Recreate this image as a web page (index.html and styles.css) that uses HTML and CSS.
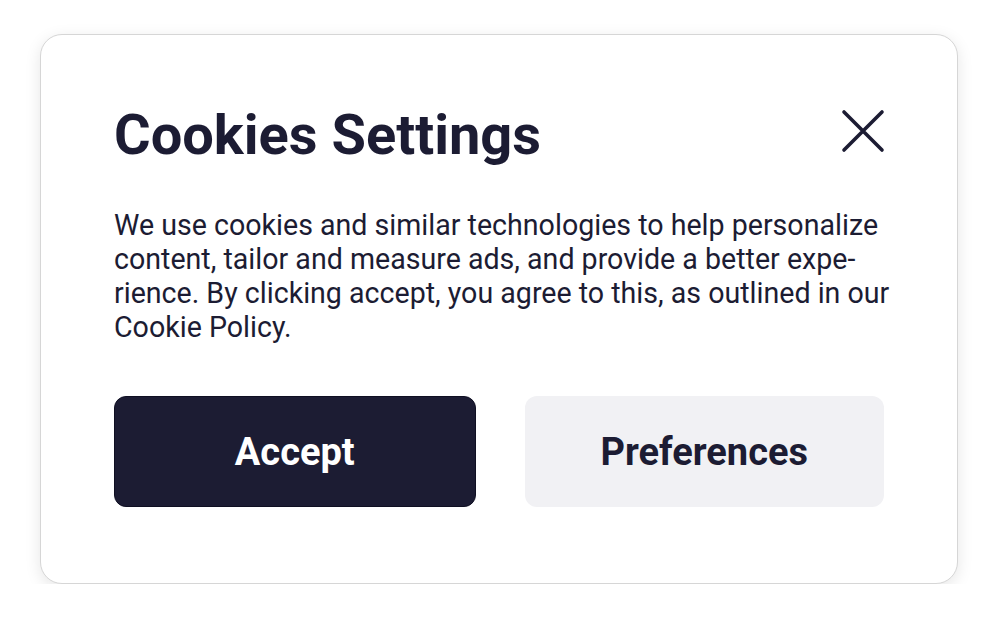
FILE: index.html
```html
<!DOCTYPE html>
<html lang="en">
<head>
  <meta charset="UTF-8">
  <meta name="viewport" content="width=device-width, initial-scale=1.0">
  <title>Cookies Settings</title>
  <link rel="stylesheet" href="styles.css">
</head>
<body>

  <!-- Cookie dialog -->
  <div class="cookie-card">
    <div class="cookie-header">
      <h1>Cookies Settings</h1>
      <button class="close-btn" aria-label="Close">
        <svg width="44" height="44" viewBox="0 0 44 44">
          <path d="M3 3 L41 41 M41 3 L3 41" stroke="#1c1c33" stroke-width="3.6" stroke-linecap="round" fill="none"/>
        </svg>
      </button>
    </div>

    <p class="cookie-text">We use cookies and similar technologies to help personalize content, tailor and measure ads, and provide a better expe&shy;rience. By clicking accept, you agree to this, as outlined in our Cookie Policy.</p>

    <div class="cookie-actions">
      <button class="btn btn-accept">Accept</button>
      <button class="btn btn-prefs">Preferences</button>
    </div>
  </div>

</body>
</html>
```

FILE: styles.css
```css
/* Reset */
* {
  margin: 0;
  padding: 0;
  box-sizing: border-box;
  font-family: Roboto, "Liberation Sans", sans-serif;
}

body {
  background-color: #fff;
  color: #1c1c33;
}

/* Card */
.cookie-card {
  width: 918px;
  height: 550px;
  margin: 34px 0 0 40px;
  padding: 66px 73px 0 73px;
  background-color: #fff;
  border: 1px solid #d6d6d6;
  border-radius: 22px;
  box-shadow: 0 4px 16px rgba(0, 0, 0, 0.1);
}

/* Header */
.cookie-header {
  display: flex;
  justify-content: space-between;
  align-items: flex-start;
}
.cookie-header h1 {
  font-size: 56px;
  font-weight: 700;
  line-height: 68px;
  color: #1c1c33;
}
.close-btn {
  background: none;
  border: none;
  cursor: pointer;
  margin-top: 8px;
  margin-right: -1px;
  display: block;
}
.close-btn svg {
  display: block;
}

/* Text */
.cookie-text {
  margin-top: 39px;
  margin-right: -12px;
  font-size: 28.6px;
  line-height: 34px;
  color: #1c1c33;
  hyphens: manual;
}

/* Buttons */
.cookie-actions {
  display: flex;
  gap: 49px;
  margin-top: 52px;
}
.btn {
  flex: 1;
  height: 111px;
  border-radius: 12px;
  font-size: 38px;
  font-weight: 700;
  cursor: pointer;
}
.btn-accept {
  background-color: #1c1c33;
  color: #fff;
  border: 1px solid #0f0f22;
}
.btn-prefs {
  background-color: #f1f1f4;
  color: #1c1c33;
  border: none;
}
```
